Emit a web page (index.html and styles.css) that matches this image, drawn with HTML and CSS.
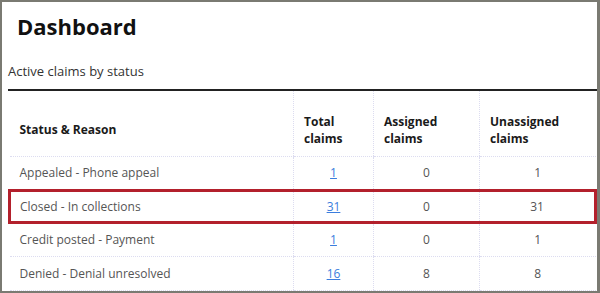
FILE: index.html
```html
<!DOCTYPE html>
<html>
<head>
<meta charset="utf-8">
<link rel="stylesheet" href="styles.css">
</head>
<body>
<div class="frame">
  <h1 class="title">Dashboard</h1>
  <div class="section">
    <h2 class="subtitle">Active claims by status</h2>
    <table class="claims">
      <thead>
        <tr>
          <th class="c-status">Status &amp; Reason</th>
          <th class="c-total">Total<br>claims</th>
          <th class="c-assigned">Assigned<br>claims</th>
          <th class="c-unassigned">Unassigned<br>claims</th>
        </tr>
      </thead>
      <tbody>
        <tr>
          <td class="c-status">Appealed - Phone appeal</td>
          <td class="num"><a href="#">1</a></td>
          <td class="num">0</td>
          <td class="num">1</td>
        </tr>
        <tr class="highlight">
          <td class="c-status">Closed - In collections</td>
          <td class="num"><a href="#">31</a></td>
          <td class="num">0</td>
          <td class="num">31</td>
        </tr>
        <tr>
          <td class="c-status">Credit posted - Payment</td>
          <td class="num"><a href="#">1</a></td>
          <td class="num">0</td>
          <td class="num">1</td>
        </tr>
        <tr>
          <td class="c-status">Denied - Denial unresolved</td>
          <td class="num"><a href="#">16</a></td>
          <td class="num">8</td>
          <td class="num">8</td>
        </tr>
      </tbody>
    </table>
  </div>
</div>
</body>
</html>
```
FILE: styles.css
```css
html, body {
  margin: 0;
  padding: 0;
  background: #ffffff;
}
body {
  font-family: "Open Sans", "Noto Sans", sans-serif;
  color: #333;
}
.frame {
  width: 600px;
  height: 293px;
  box-sizing: border-box;
  border: 2px solid #7a7a72;
  border-right-width: 3px;
  overflow: hidden;
  background: #fff;
}
.title {
  margin: 0;
  padding: 10px 0 0 15px;
  font-size: 22px;
  font-weight: 700;
  line-height: 29px;
  color: #111;
}
.section {
  padding: 21px 0 0 6px;
}
.subtitle {
  margin: 0;
  font-size: 13px;
  font-weight: 400;
  line-height: 18px;
  color: #333;
  padding-bottom: 9px;
  border-bottom: 2px solid #222;
}
.claims {
  width: 100%;
  table-layout: fixed;
  border-collapse: collapse;
  font-size: 12px;
}
.claims th,
.claims td {
  box-sizing: border-box;
}
.claims th {
  font-weight: 700;
  color: #1a1a1a;
  text-align: left;
  vertical-align: middle;
  line-height: 17px;
  height: 65px;
  padding: 13px 0 0 10px;
  border-bottom: 1px dotted #dcdcf0;
}
.claims td {
  height: 34px;
  padding: 0;
  color: #555;
  border-bottom: 1px dotted #dcdcf0;
}
.claims th + th,
.claims td + td {
  border-left: 1px dotted #dcdcf0;
}
.c-status { width: 284px; }
.c-total { width: 80px; }
.c-assigned { width: 106px; }
.claims td.c-status { padding-left: 10px; }
.num {
  text-align: center;
}
.num a {
  color: #3b7ddd;
  text-decoration: underline;
}
.highlight td {
  height: 32px;
  border-top: 3px solid #b3202c;
  border-bottom: 3px solid #b3202c;
}
.highlight td:first-child {
  border-left: 3px solid #b3202c;
}
.claims .highlight td.c-status {
  padding-left: 9px;
}
.highlight td:last-child {
  border-right: 3px solid #b3202c;
}
```
